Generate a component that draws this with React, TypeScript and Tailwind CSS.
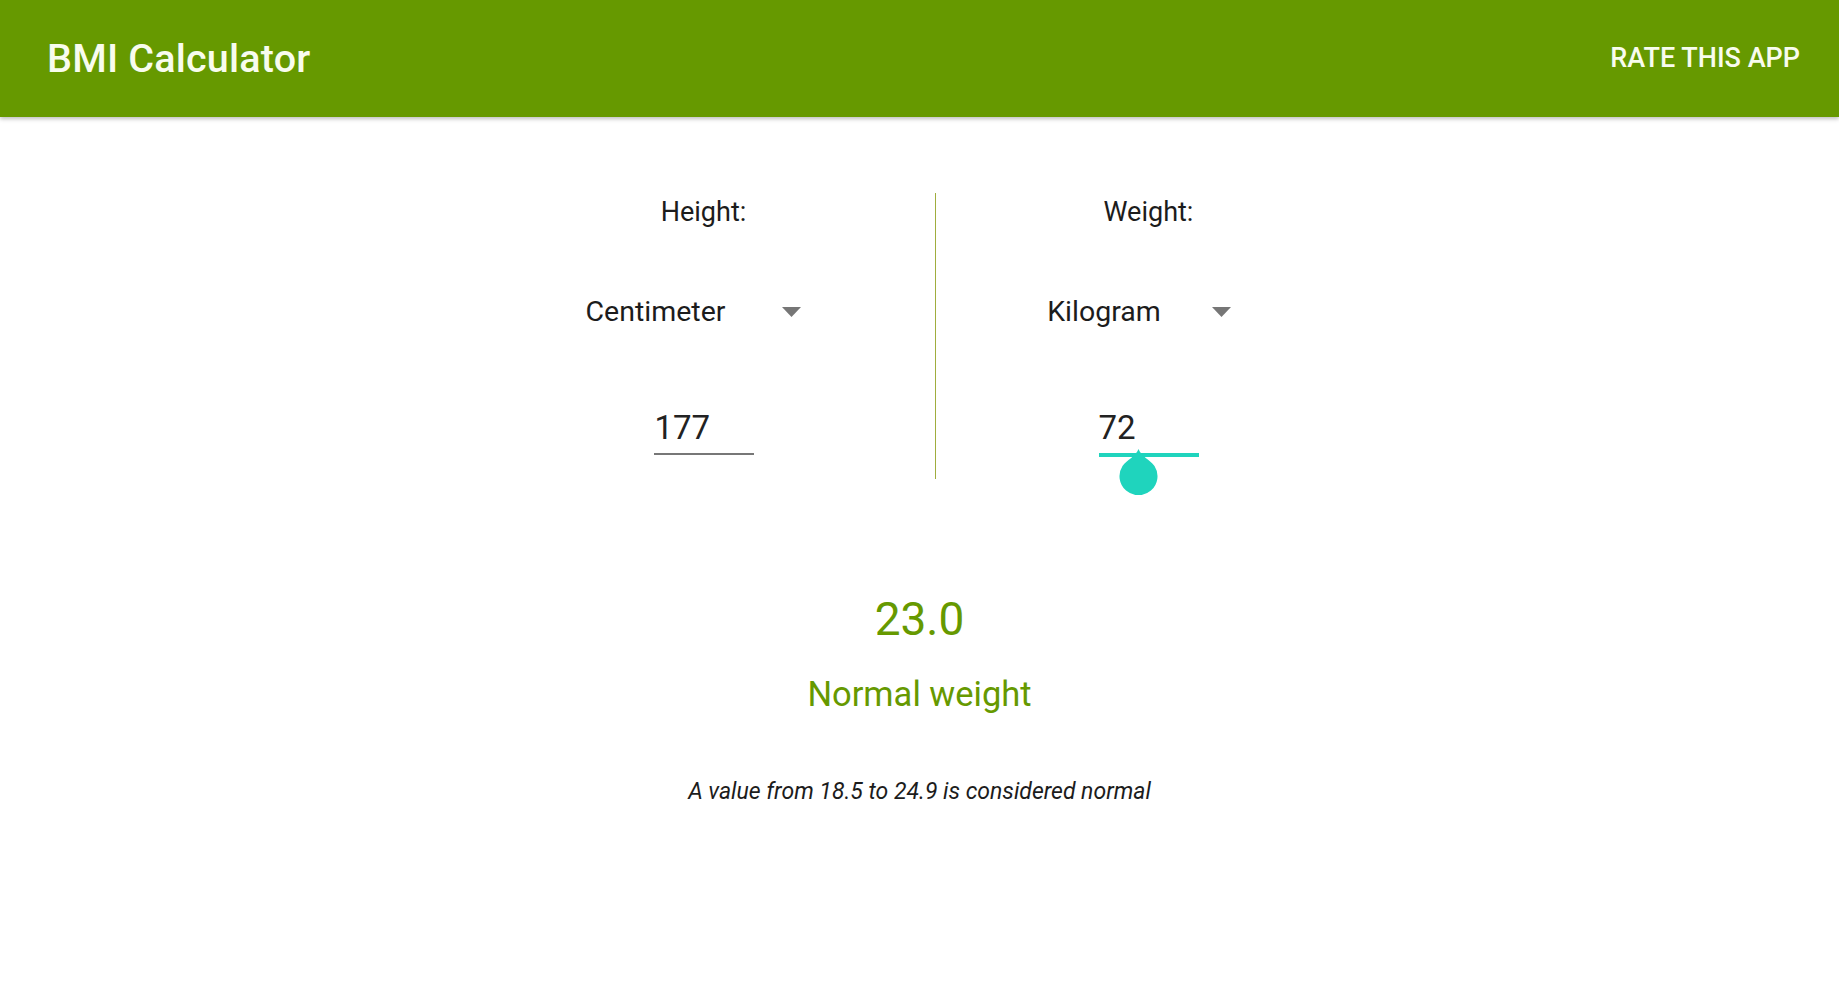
import React from 'react';

const Caret = () => (
  <svg width="19" height="10" viewBox="0 0 19 10" className="shrink-0">
    <polygon points="0,0 19,0 9.5,10" fill="#767676" />
  </svg>
);

const Dropdown = ({ label, gap, className }: { label: string; gap: string; className: string }) => (
  <div className={`flex items-center h-[36px] ${className}`}>
    <span className="text-[28.5px] leading-[36px] text-[#1c1c1c]">{label}</span>
    <span className={gap} />
    <Caret />
  </div>
);

export default function App() {
  return (
    <div className="min-h-screen bg-white font-['Roboto',sans-serif]">
      {/* Toolbar */}
      <header className="h-[117px] bg-[#669900] flex items-center justify-between pl-[47px] pr-[39px] shadow-[0_2px_4px_rgba(0,0,0,0.25)] relative z-10">
        <h1 className="text-[39.5px] font-medium text-[#f8fcee] tracking-[0.2px]">BMI Calculator</h1>
        <span className="text-[27px] font-medium text-[#f8fcee]">RATE THIS APP</span>
      </header>

      <main className="flex flex-col items-center">
        <div className="flex justify-center pt-[76px] pr-[5px]">
          {/* Height column */}
          <div className="w-[462px] flex flex-col items-center pt-[3px]">
            <div className="text-[27px] leading-[32px] text-[#1c1c1c]">Height:</div>
            <Dropdown label="Centimeter" gap="w-[57px]" className="mt-[66px] pr-[20px]" />
            <div className="mt-[78px] w-[100px] pb-[5px] border-b-2 border-[#777777]">
              <span className="text-[33px] leading-[40px] text-[#222222] pl-[1px]">177</span>
            </div>
          </div>

          {/* Divider */}
          <div className="w-px h-[286px] bg-[#a0ad3e]" />

          {/* Weight column */}
          <div className="w-[426px] flex flex-col items-center pt-[3px]">
            <div className="text-[27px] leading-[32px] text-[#1c1c1c]">Weight:</div>
            <Dropdown label="Kilogram" gap="w-[51px]" className="mt-[66px] pr-[19px]" />
            <div className="mt-[78px] w-[100px] pb-[5px] border-b-4 border-[#1fd4bd] relative">
              <span className="text-[33px] leading-[40px] text-[#222222]">72</span>
              {/* Text selection handle */}
              <div className="absolute left-[20px] top-[41px] w-[39px] h-[46px]">
                <svg width="39" height="46" viewBox="0 0 39 46">
                  <path d="M19.5 0 C22 7 31 11 35.5 17 A19 19 0 1 1 3.5 17 C8 11 17 7 19.5 0 Z" fill="#1fd4bd" />
                </svg>
              </div>
            </div>
          </div>
        </div>

        {/* Result */}
        <div className="mt-[113px] text-[46px] leading-[54px] text-[#669900]">23.0</div>
        <div className="mt-[28px] text-[34.5px] leading-[40px] text-[#669900]">Normal weight</div>
        <div className="mt-[64px] text-[23px] leading-[28px] italic text-[#1c1c1c]">
          A value from 18.5 to 24.9 is considered normal
        </div>
      </main>
    </div>
  );
}
